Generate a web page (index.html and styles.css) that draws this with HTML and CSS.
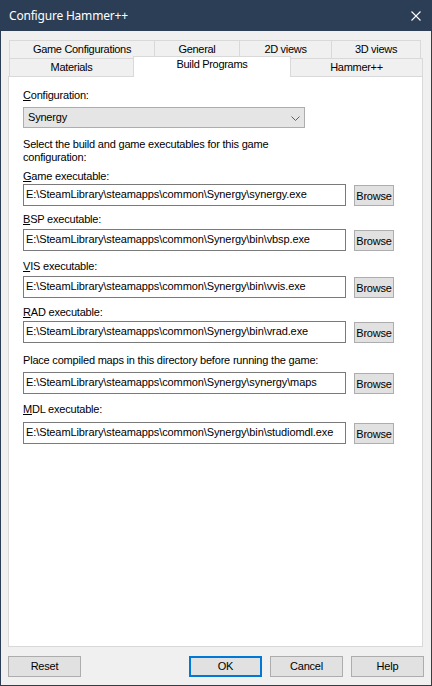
FILE: index.html
```html
<!DOCTYPE html>
<html>
<head>
<meta charset="utf-8">
<title>Configure Hammer++</title>
<link rel="stylesheet" href="styles.css">
</head>
<body>
<div class="window">
  <div class="titlebar">
    <span class="title">Configure Hammer++</span>
    <svg class="close" width="10" height="10" viewBox="0 0 10 10"><path d="M0.5 0.5 L9.5 9.5 M9.5 0.5 L0.5 9.5" stroke="#ffffff" stroke-width="1.1" fill="none"/></svg>
  </div>
  <div class="body">
    <div class="tabrow">
      <div class="tab t-game">Game Configurations</div>
      <div class="tab t-general">General</div>
      <div class="tab t-2d">2D views</div>
      <div class="tab t-3d">3D views</div>
    </div>
    <div class="tabrow">
      <div class="tab t-mat">Materials</div>
      <div class="tab t-build active">Build Programs</div>
      <div class="tab t-hammer">Hammer++</div>
    </div>
    <div class="panel">
      <div class="label l-config"><u>C</u>onfiguration:</div>
      <div class="combo"><span>Synergy</span><svg class="chev" width="9" height="5" viewBox="0 0 9 5"><path d="M0.5 0.5 L4.5 4.5 L8.5 0.5" stroke="#606060" stroke-width="1" fill="none"/></svg></div>
      <div class="desc">Select the build and game executables for this game<br>configuration:</div>

      <div class="label l-game"><u>G</u>ame executable:</div>
      <div class="field r-game"><div class="input">E:\SteamLibrary\steamapps\common\Synergy\synergy.exe</div><div class="browse">Browse</div></div>

      <div class="label l-bsp"><u>B</u>SP executable:</div>
      <div class="field r-bsp"><div class="input">E:\SteamLibrary\steamapps\common\Synergy\bin\vbsp.exe</div><div class="browse">Browse</div></div>

      <div class="label l-vis"><u>V</u>IS executable:</div>
      <div class="field r-vis"><div class="input">E:\SteamLibrary\steamapps\common\Synergy\bin\vvis.exe</div><div class="browse">Browse</div></div>

      <div class="label l-rad"><u>R</u>AD executable:</div>
      <div class="field r-rad"><div class="input">E:\SteamLibrary\steamapps\common\Synergy\bin\vrad.exe</div><div class="browse">Browse</div></div>

      <div class="label l-maps">Place compiled maps in this directory before running the game:</div>
      <div class="field r-maps"><div class="input">E:\SteamLibrary\steamapps\common\Synergy\synergy\maps</div><div class="browse">Browse</div></div>

      <div class="label l-mdl"><u>M</u>DL executable:</div>
      <div class="field r-mdl"><div class="input">E:\SteamLibrary\steamapps\common\Synergy\bin\studiomdl.exe</div><div class="browse">Browse</div></div>
    </div>
    <div class="footer">
      <div class="btn">Reset</div>
      <div class="spacer"></div>
      <div class="btn default">OK</div>
      <div class="btn">Cancel</div>
      <div class="btn">Help</div>
    </div>
  </div>
</div>
</body>
</html>
```

FILE: styles.css
```css
* { box-sizing: border-box; }
html, body { margin: 0; padding: 0; }
body {
  width: 432px;
  height: 686px;
  background: #f0f0f0;
  font-family: "Liberation Sans", Arial, sans-serif;
  font-size: 11px;
  line-height: 13px;
  color: #000;
  letter-spacing: -0.2px;
}
.window {
  width: 432px;
  height: 686px;
  border: 1px solid #2b3e56;
  border-top: none;
  background: #f0f0f0;
  display: flex;
  flex-direction: column;
}
.titlebar {
  height: 31px;
  margin: 0 -1px;
  background: #2b3e56;
  color: #fff;
  display: flex;
  align-items: center;
  padding-left: 9px;
  padding-right: 11px;
}
.title {
  font-family: "Noto Sans", "Open Sans", sans-serif;
  font-size: 12px;
  letter-spacing: -0.2px;
  flex: 1;
  padding-bottom: 1px;
}
.close { display: block; }
.body {
  padding: 9px 7px 0 7px;
  display: flex;
  flex-direction: column;
}
.tabrow {
  display: flex;
  height: 18px;
  margin-left: 1px;
  align-items: flex-start;
}
.tab {
  height: 18px;
  border: 1px solid #d9d9d9;
  border-bottom: none;
  background: #f0f0f0;
  text-align: center;
  padding-top: 2px;
  margin-left: -1px;
  letter-spacing: -0.3px;
}
.tab:first-child { margin-left: 0; }
.t-game { width: 146px; }
.t-general { width: 86px; }
.t-2d { width: 93px; }
.t-3d { width: 90px; }
.t-mat { width: 125px; }
.t-build { width: 158px; }
.t-hammer { width: 133px; }
.tab.active {
  background: #fff;
  height: 21px;
  margin-top: -2px;
  position: relative;
  z-index: 1;
  padding-top: 1px;
}
.panel {
  height: 571px;
  margin-right: 1px;
  border: 1px solid #d9d9d9;
  background: #fff;
  padding: 12px 0 0 14px;
}
.label { height: 13px; white-space: nowrap; }
.combo {
  width: 282px;
  height: 21px;
  margin-top: 5px;
  border: 1px solid #adadad;
  background: #e5e5e5;
  display: flex;
  align-items: center;
  padding-left: 4px;
  padding-right: 4px;
}
.combo span { flex: 1; }
.chev { display: block; margin-top: 1px; }
.desc { margin-top: 10px; }
.field { display: flex; align-items: flex-start; }
.input {
  width: 323px;
  height: 22px;
  border: 1px solid #7a7a7a;
  background: #fff;
  padding: 3px 0 0 2px;
  white-space: nowrap;
  overflow: hidden;
  letter-spacing: -0.1px;
}
.browse {
  width: 40px;
  height: 21px;
  margin-left: 8px;
  margin-top: 1px;
  border: 1px solid #adadad;
  background: #e1e1e1;
  text-align: center;
  padding-top: 4px;
}
.l-game { margin-top: 6px; }
.r-game { margin-top: 1px; }
.l-bsp { margin-top: 7px; }
.r-bsp { margin-top: 3px; }
.l-vis { margin-top: 9px; }
.r-vis { margin-top: 3px; }
.l-rad { margin-top: 8px; }
.r-rad { margin-top: 2px; }
.l-maps { margin-top: 11px; }
.r-maps { margin-top: 5px; }
.l-mdl { margin-top: 9px; }
.r-mdl { margin-top: 6px; }
.footer {
  display: flex;
  margin-top: 9px;
  gap: 8px;
}
.spacer { flex: 1; }
.btn {
  width: 73px;
  height: 21px;
  border: 1px solid #adadad;
  background: #e1e1e1;
  text-align: center;
  line-height: 19px;
}
.btn.default {
  border: 2px solid #0078d7;
  line-height: 17px;
}
```
